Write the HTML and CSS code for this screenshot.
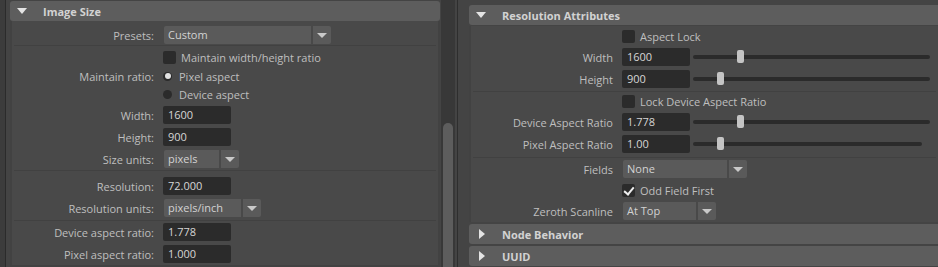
FILE: index.html
```html
<!DOCTYPE html>
<html lang="en">
<head>
  <meta charset="UTF-8" />
  <meta name="viewport" content="width=device-width, initial-scale=1.0" />
  <title>Attribute Editor</title>
  <link rel="stylesheet" href="styles.css">
</head>
<body>
  <div class="editor">
    <div class="gutter"></div>

    <div class="scroll">
      <div class="frame">
        <div class="frame-head"><span class="arrow-down"></span>Image Size</div>
        <div class="frame-body body-left">
          <div class="section sec-presets">
            <div class="row row-20">
              <span class="label">Presets:</span>
              <div class="combo combo-presets"><span class="combo-text">Custom</span><span class="combo-btn"></span></div>
            </div>
          </div>

          <div class="section sec-size">
            <div class="row row-20">
              <span class="label"></span>
              <span class="check"></span><span class="opt-text">Maintain width/height ratio</span>
            </div>
            <div class="row row-18">
              <span class="label">Maintain ratio:</span>
              <span class="radio on"></span><span class="radio-text">Pixel aspect</span>
            </div>
            <div class="row row-19">
              <span class="label"></span>
              <span class="radio"></span><span class="radio-text">Device aspect</span>
            </div>
            <div class="row">
              <span class="label">Width:</span>
              <div class="field">1600</div>
            </div>
            <div class="row">
              <span class="label">Height:</span>
              <div class="field">900</div>
            </div>
            <div class="row">
              <span class="label">Size units:</span>
              <div class="combo combo-units"><span class="combo-text">pixels</span><span class="combo-btn"></span></div>
            </div>
          </div>

          <div class="section sec-res">
            <div class="row">
              <span class="label">Resolution:</span>
              <div class="field">72.000</div>
            </div>
            <div class="row">
              <span class="label">Resolution units:</span>
              <div class="combo combo-resunits"><span class="combo-text">pixels/inch</span><span class="combo-btn"></span></div>
            </div>
          </div>

          <div class="section sec-aspect">
            <div class="row">
              <span class="label">Device aspect ratio:</span>
              <div class="field">1.778</div>
            </div>
            <div class="row">
              <span class="label">Pixel aspect ratio:</span>
              <div class="field">1.000</div>
            </div>
          </div>
        </div>
      </div>
    </div>

    <div class="scrollbar"><div class="scroll-thumb"></div></div>
    <div class="splitter"></div>

    <div class="pane-right">
      <div class="frame">
        <div class="frame-head"><span class="arrow-down"></span>Resolution Attributes</div>
        <div class="frame-body body-right">
          <div class="section sec-r1">
            <div class="row row-19">
              <span class="label"></span>
              <span class="check"></span><span class="opt-text">Aspect Lock</span>
            </div>
            <div class="row">
              <span class="label">Width</span>
              <div class="field">1600</div>
              <div class="slider"><span class="knob" style="left: 44px"></span></div>
            </div>
            <div class="row">
              <span class="label">Height</span>
              <div class="field">900</div>
              <div class="slider"><span class="knob" style="left: 24px"></span></div>
            </div>
          </div>

          <div class="section sec-r2">
            <div class="row row-19">
              <span class="label"></span>
              <span class="check"></span><span class="opt-text">Lock Device Aspect Ratio</span>
            </div>
            <div class="row">
              <span class="label">Device Aspect Ratio</span>
              <div class="field">1.778</div>
              <div class="slider"><span class="knob" style="left: 44px"></span></div>
            </div>
            <div class="row">
              <span class="label">Pixel Aspect Ratio</span>
              <div class="field">1.00</div>
              <div class="slider slider-short"><span class="knob" style="left: 24px"></span></div>
            </div>
          </div>

          <div class="section sec-r3">
            <div class="row">
              <span class="label">Fields</span>
              <div class="combo combo-fields"><span class="combo-text">None</span><span class="combo-btn"></span></div>
            </div>
            <div class="row row-20">
              <span class="label"></span>
              <span class="check checked"></span><span class="opt-text">Odd Field First</span>
            </div>
            <div class="row">
              <span class="label">Zeroth Scanline</span>
              <div class="combo combo-scan"><span class="combo-text">At Top</span><span class="combo-btn"></span></div>
            </div>
          </div>
        </div>
      </div>

      <div class="frame-head closed"><span class="arrow-right"></span>Node Behavior</div>
      <div class="frame-head closed"><span class="arrow-right"></span>UUID</div>
    </div>
  </div>
</body>
</html>
```

FILE: styles.css
```css
* {
  box-sizing: border-box;
}

body {
  margin: 0;
  background: #444;
  font-family: 'Open Sans', 'Noto Sans', sans-serif;
  font-size: 11px;
  color: #bfbfbf;
  overflow: hidden;
}

.editor {
  display: flex;
  height: 267px;
  overflow: hidden;
}

.gutter {
  width: 6px;
  flex-shrink: 0;
  background: #3c3c3c;
  border-right: 1px solid #2b2b2b;
}

.scroll {
  width: 435px;
  flex-shrink: 0;
  padding: 1px 1px 0 4px;
}

.scrollbar {
  width: 14px;
  flex-shrink: 0;
  background: #383838;
  padding: 123px 2px 0;
}

.scroll-thumb {
  height: 144px;
  background: #5d5d5d;
  border-radius: 5px 5px 0 0;
}

.splitter {
  width: 12px;
  flex-shrink: 0;
  margin-left: 2px;
  border-left: 1px solid #2e2e2e;
}

.pane-right {
  flex: 1;
  min-width: 0;
  padding-top: 5px;
  overflow: hidden;
}

/* collapsible frames */
.frame-head {
  display: flex;
  align-items: center;
  height: 20px;
  background: #5d5d5d;
  border-radius: 3px;
  color: #d2d2d2;
  font-weight: bold;
  font-size: 11px;
}

.pane-right .frame-head {
  border-radius: 3px 0 0 3px;
}

.frame-head.closed {
  margin-top: 2px;
}

.arrow-down {
  width: 0;
  height: 0;
  margin: 0 16px 0 7px;
  border-left: 5px solid transparent;
  border-right: 5px solid transparent;
  border-top: 6px solid #e4e4e4;
}

.arrow-right {
  width: 0;
  height: 0;
  margin: 0 17px 0 10px;
  border-top: 5px solid transparent;
  border-bottom: 5px solid transparent;
  border-left: 6px solid #e4e4e4;
}

.frame-body {
  background: #494949;
  border-left: 2px solid #424242;
}

.body-left {
  border-right: 2px solid #424242;
  border-bottom: 2px solid #424242;
}

.body-right {
  margin-top: 1px;
}

.section {
  border-bottom: 1px solid #414141;
  margin: 0 2px;
}

.section:last-child {
  border-bottom: none;
}

.sec-presets { padding-top: 4px; }
.sec-size { padding-top: 1px; }
.sec-res { padding: 4px 0 1px; }
.sec-r1 { padding: 1px 0 1px; }
.sec-r2 { padding-bottom: 2px; }

/* rows */
.row {
  display: flex;
  align-items: center;
  height: 22px;
  margin-left: -2px;
}

.row-20 { height: 20px; }
.row-19 { height: 19px; }
.row-18 { height: 18px; }

.label {
  width: 142px;
  flex-shrink: 0;
  margin-right: 9px;
  text-align: right;
  white-space: nowrap;
}

.field {
  width: 68px;
  height: 18px;
  line-height: 18px;
  padding-left: 5px;
  background: #2b2b2b;
  border-radius: 2px;
  color: #d6d6d6;
  flex-shrink: 0;
}

.combo {
  display: flex;
  height: 18px;
  margin-left: 1px;
  flex-shrink: 0;
}

.combo-text {
  line-height: 18px;
  padding-left: 4px;
  background: #5a5a5a;
  border-radius: 2px 0 0 2px;
  color: #d2d2d2;
}

.combo-btn {
  width: 18px;
  margin-left: 2px;
  background: #5a5a5a;
  border-radius: 0 2px 2px 0;
  display: flex;
  align-items: center;
  justify-content: center;
}

.combo-btn::after {
  content: "";
  border-left: 5px solid transparent;
  border-right: 5px solid transparent;
  border-top: 5px solid #c9c9c9;
}

.combo-presets .combo-text { width: 147px; }
.combo-units .combo-text { width: 55px; }
.combo-resunits .combo-text { width: 77px; }
.combo-fields .combo-text { width: 104px; }
.combo-scan .combo-text { width: 73px; }

.check {
  width: 13px;
  height: 13px;
  margin-right: 5px;
  background: #2b2b2b;
  border-radius: 2px;
  flex-shrink: 0;
  position: relative;
}

.check.checked::after {
  content: "";
  position: absolute;
  left: 4px;
  top: 1px;
  width: 4px;
  height: 8px;
  border-right: 2px solid #eee;
  border-bottom: 2px solid #eee;
  transform: rotate(40deg);
}

.opt-text,
.radio-text {
  white-space: nowrap;
}

.radio {
  width: 9px;
  height: 9px;
  margin-right: 7px;
  border-radius: 50%;
  background: #2b2b2b;
  flex-shrink: 0;
  display: flex;
  align-items: center;
  justify-content: center;
}

.radio.on::after {
  content: "";
  width: 6px;
  height: 6px;
  border-radius: 50%;
  background: #e2e2e2;
}

/* sliders */
.slider {
  flex: 1;
  position: relative;
  height: 4px;
  margin: 0 6px 0 3px;
  background: #2b2b2b;
  border-radius: 2px;
}

.slider-short {
  margin-right: 14px;
}

.knob {
  position: absolute;
  top: -5px;
  width: 7px;
  height: 13px;
  background: #c4c4c4;
  border-radius: 2px;
}
```
